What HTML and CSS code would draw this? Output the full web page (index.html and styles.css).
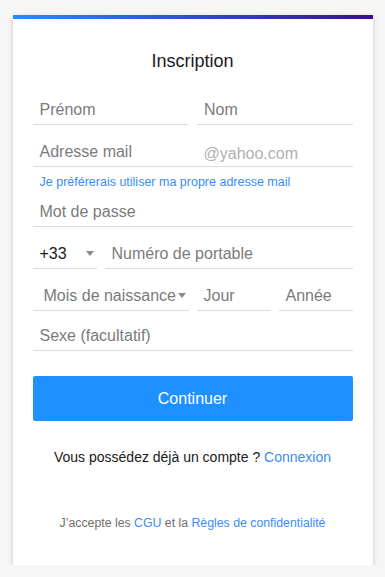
FILE: index.html
```html
<!DOCTYPE html>
<html lang="fr">
<head>
    <meta charset="UTF-8">
    <meta name="viewport" content="width=device-width, initial-scale=1.0">
    <title>Inscription</title>
    <link rel="stylesheet" href="styles.css">
</head>
<body>

<div class="card">
    <h1>Inscription</h1>

    <!-- Names -->
    <div class="row row-first cols-2">
        <div class="field">Prénom</div>
        <div class="field">Nom</div>
    </div>

    <!-- Mail -->
    <div class="row">
        <div class="field field-mail">
            <span class="mail-name">Adresse mail</span>
            <span class="mail-domain">@yahoo.com</span>
        </div>
    </div>
    <a class="own-mail" href="#">Je préférerais utiliser ma propre adresse mail</a>

    <div class="row row-pass">
        <div class="field">Mot de passe</div>
    </div>

    <!-- Phone -->
    <div class="row cols-phone">
        <div class="field field-select field-code">+33<span class="caret"></span></div>
        <div class="field">Numéro de portable</div>
    </div>

    <!-- Birth -->
    <div class="row cols-birth">
        <div class="field field-select field-month">Mois de naissance<span class="caret"></span></div>
        <div class="field">Jour</div>
        <div class="field">Année</div>
    </div>

    <div class="row row-sex">
        <div class="field">Sexe (facultatif)</div>
    </div>

    <button class="button">Continuer</button>

    <p class="login">Vous possédez déjà un compte ? <a href="#">Connexion</a></p>

    <p class="terms">J’accepte les <a href="#">CGU</a> et la <a href="#">Règles de confidentialité</a></p>
</div>

</body>
</html>
```

FILE: styles.css
```css
body {
    font-family: "Liberation Sans", Arial, sans-serif;
    background-color: #f6f6f6;
    margin: 0;
    padding: 15px 0 0;
}
a {
    color: #3b8cf5;
    text-decoration: none;
}
.card {
    width: 360px;
    box-sizing: border-box;
    margin: 0 auto;
    background-color: #fff;
    border-top: 4px solid #1e90ff;
    border-image: linear-gradient(to right, #1e90ff, #2f54d0 45%, #3a0c98) 1;
    border-width: 4px 0 0;
    padding: 32px 20px 34px;
    box-shadow: 0 2px 5px rgba(0, 0, 0, 0.2);
}
h1 {
    margin: 0;
    font-size: 18px;
    line-height: 20px;
    font-weight: normal;
    text-align: center;
    color: #1a1a1a;
}
.row {
    display: grid;
    grid-template-columns: 1fr;
    margin-top: 18px;
}
.row-first {
    margin-top: 30px;
}
.row-pass {
    margin-top: 13px;
}
.row-sex {
    margin-top: 16px;
}
.cols-2 {
    grid-template-columns: 1fr 1fr;
    column-gap: 9px;
}
.cols-phone {
    grid-template-columns: 64px 1fr;
    column-gap: 8px;
}
.cols-birth {
    grid-template-columns: 156px 1fr 1fr;
    column-gap: 8px;
}
.field {
    position: relative;
    padding: 0 7px 5px;
    font-size: 16px;
    line-height: 18px;
    color: #7b7b7b;
    border-bottom: 1px solid #dcdcdc;
    white-space: nowrap;
}
.field-mail {
    display: flex;
}
.mail-name {
    width: 164px;
}
.mail-domain {
    color: #b0b0b0;
    position: relative;
    top: 2px;
}
.own-mail {
    display: block;
    margin-top: 7px;
    padding-left: 7px;
    font-size: 12.5px;
    line-height: 16px;
}
.field-code {
    color: #1a1a1a;
}
.field-month {
    padding-left: 11px;
}
.caret {
    position: absolute;
    top: 6px;
    width: 0;
    height: 0;
    border-left: 4.5px solid transparent;
    border-right: 4.5px solid transparent;
    border-top: 5px solid #8a8a8a;
}
.field-code .caret {
    left: 53px;
}
.field-month .caret {
    left: 145px;
}
.button {
    display: block;
    width: 100%;
    height: 45px;
    margin-top: 25px;
    background-color: #1e90ff;
    color: #fff;
    border: none;
    border-radius: 2px;
    font-family: inherit;
    font-size: 16px;
    cursor: pointer;
}
.login {
    margin: 27px 0 0;
    font-size: 14px;
    line-height: 18px;
    text-align: center;
    color: #1a1a1a;
}
.terms {
    margin: 49px 0 0;
    font-size: 12.3px;
    line-height: 16px;
    text-align: center;
    color: #6e6e6e;
}
```
